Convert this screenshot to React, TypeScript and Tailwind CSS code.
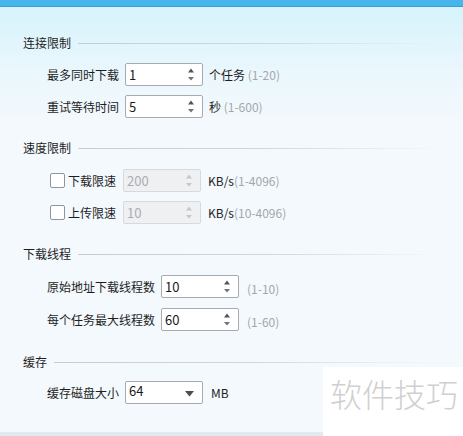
import { FC, ReactNode } from "react";

const font = { fontFamily: '"Noto Sans CJK SC", "Noto Sans", sans-serif' };

const SectionTitle: FC<{ title: string; className?: string }> = ({ title, className }) => (
  <div className={`flex h-4 items-center pl-[23px] pr-[22px] ${className ?? ""}`}>
    <span className="text-[12px] leading-4 text-[#1e1e1e]">{title}</span>
    <div className="ml-[7px] h-px flex-1 bg-gradient-to-r from-[#c5ccd3] via-[#cfd6dc] to-transparent" />
  </div>
);

const Arrows: FC<{ disabled?: boolean }> = ({ disabled }) => (
  <svg width="8" height="15" viewBox="0 0 8 15" className="mr-[7px]">
    <path d="M4 1.5 L7 5.5 L1 5.5 Z" fill={disabled ? "#c4c8cc" : "#50555b"} />
    <path d="M1 10 L7 10 L4 13.5 Z" fill={disabled ? "#c4c8cc" : "#70757b"} />
  </svg>
);

const SpinBox: FC<{ value: string; disabled?: boolean }> = ({ value, disabled }) => (
  <div
    className={`flex h-[23px] w-[78px] items-center justify-between rounded-[2px] border ${
      disabled ? "border-[#d6dadf] bg-[#eef0f2] text-[#a9adb1]" : "border-[#a6abb1] bg-white text-[#1a1a1a]"
    }`}
  >
    <span className="pl-[3px] text-[13px] leading-none">{value}</span>
    <Arrows disabled={disabled} />
  </div>
);

const Combo: FC<{ value: string }> = ({ value }) => (
  <div className="flex h-[23px] w-[78px] items-start justify-between rounded-[2px] border border-[#a6abb1] bg-white">
    <span className="pl-[3px] pt-[1px] text-[13px] leading-4 text-[#1a1a1a]">{value}</span>
    <svg width="9" height="6" viewBox="0 0 9 6" className="mr-[8px] mt-[9px]">
      <path d="M0 0 L9 0 L4.5 5.5 Z" fill="#4a4f55" />
    </svg>
  </div>
);

const Hint: FC<{ children: ReactNode }> = ({ children }) => (
  <span className="text-[12px] text-[#a3a7ab]">{children}</span>
);

const Row: FC<{ label: string; children: ReactNode; className?: string }> = ({ label, children, className }) => (
  <div className={`flex h-[23px] items-center pl-[47px] ${className ?? ""}`}>
    <span className="mr-[6px] text-[12px] text-[#1e1e1e]">{label}</span>
    {children}
  </div>
);

const CheckRow: FC<{ label: string; value: string; hint: string; className?: string }> = ({
  label,
  value,
  hint,
  className,
}) => (
  <div className={`flex h-[23px] items-center pl-[50px] ${className ?? ""}`}>
    <div className="mr-[3px] h-[15px] w-[15px] rounded-[2px] border border-[#8e959c] bg-white" />
    <span className="mr-[7px] text-[12px] text-[#1e1e1e]">{label}</span>
    <SpinBox value={value} disabled />
    <span className="ml-[7px] text-[12px] text-[#1e1e1e]">KB/s</span>
    <Hint>{hint}</Hint>
  </div>
);

const App: FC = () => {
  return (
    <div style={font} className="relative flex h-[436px] w-[463px] flex-col overflow-hidden bg-[#f4f9fd]">
      <div className="h-[6px] bg-[#45b5eb]" />
      <div className="h-px bg-[#3b9fd2]" />
      <div className="flex flex-1 flex-col bg-gradient-to-b from-[#d6f3fb] via-[#eaf7fd] via-[15%] to-[#f4f9fd] to-[28%]">
        <SectionTitle title="连接限制" className="mt-[28px]" />
        <Row label="最多同时下载" className="mt-[12px]">
          <SpinBox value="1" />
          <span className="ml-[6px] text-[12px] text-[#1e1e1e]">个任务</span>
          <Hint>&nbsp;(1-20)</Hint>
        </Row>
        <Row label="重试等待时间" className="mt-[9px]">
          <SpinBox value="5" />
          <span className="ml-[6px] text-[12px] text-[#1e1e1e]">秒</span>
          <Hint>&nbsp;(1-600)</Hint>
        </Row>

        <SectionTitle title="速度限制" className="mt-[22px]" />
        <CheckRow label="下载限速" value="200" hint="(1-4096)" className="mt-[13px]" />
        <CheckRow label="上传限速" value="10" hint="(10-4096)" className="mt-[9px]" />

        <SectionTitle title="下载线程" className="mt-[22px]" />
        <Row label="原始地址下载线程数" className="mt-[13px]">
          <SpinBox value="10" />
          <span className="ml-[8px]">
            <Hint>(1-10)</Hint>
          </span>
        </Row>
        <Row label="每个任务最大线程数" className="mt-[10px]">
          <SpinBox value="60" />
          <span className="ml-[8px]">
            <Hint>(1-60)</Hint>
          </span>
        </Row>

        <SectionTitle title="缓存" className="mt-[23px]" />
        <Row label="缓存磁盘大小" className="mt-[11px]">
          <Combo value="64" />
          <span className="ml-[8px] text-[12px] text-[#1e1e1e]">MB</span>
        </Row>
      </div>
      <div className="h-[4px] bg-[#e1eaf1]" />

      <div className="absolute bottom-0 left-[323px] flex h-[69px] w-[140px] items-start bg-white pl-[7px] pt-[6px]">
        <span className="text-[32px] font-light leading-[40px] text-[#d0d0d0]">软件技巧</span>
      </div>
    </div>
  );
};

export default App;
